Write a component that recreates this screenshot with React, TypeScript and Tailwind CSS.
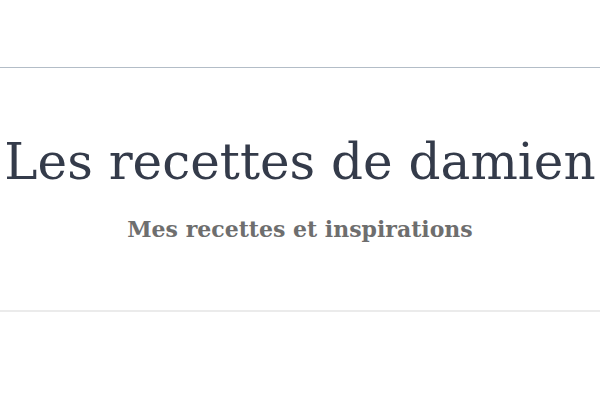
export default function App() {
  return (
    <div className="w-[600px] h-[400px] bg-white">
      <div className="h-[68px] border-b border-[#b3bdc7]" />
      <div className="h-[244px] flex flex-col items-center border-b-2 border-[#ebebeb]">
        <h1
          className="mt-[62px] text-[50px] leading-[64px] text-[#343b4a] whitespace-nowrap"
          style={{ fontFamily: '"DejaVu Serif", serif' }}
        >
          Les recettes de damien
        </h1>
        <p
          className="mt-[21px] text-[22px] leading-[28px] font-bold text-[#6e6e6e]"
          style={{ fontFamily: '"DejaVu Serif", serif' }}
        >
          Mes recettes et inspirations
        </p>
      </div>
    </div>
  );
}
